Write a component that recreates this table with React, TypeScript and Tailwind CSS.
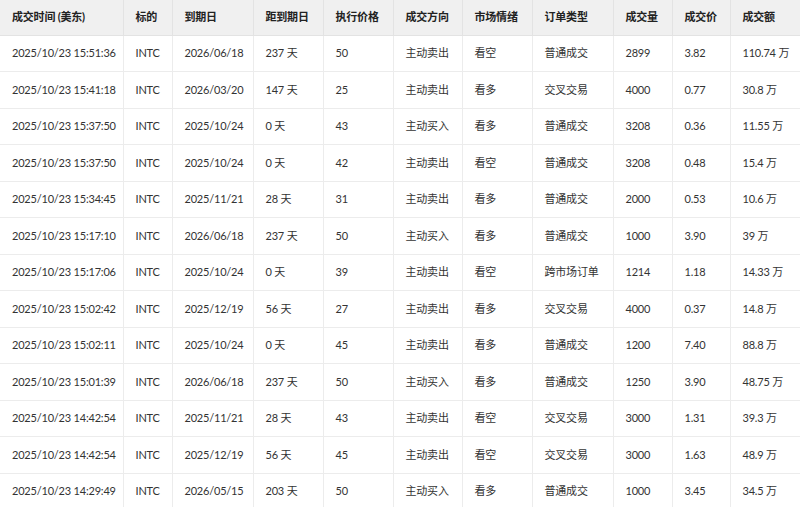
const cols = [
  { label: '成交时间 (美东)', w: 'w-[123px]' },
  { label: '标的', w: 'w-[49px]' },
  { label: '到期日', w: 'w-[81px]' },
  { label: '距到期日', w: 'w-[70px]' },
  { label: '执行价格', w: 'w-[70px]' },
  { label: '成交方向', w: 'w-[69px]' },
  { label: '市场情绪', w: 'w-[70px]' },
  { label: '订单类型', w: 'w-[81px]' },
  { label: '成交量', w: 'w-[59px]' },
  { label: '成交价', w: 'w-[58px]' },
  { label: '成交额', w: 'w-[70px]' },
];

const rows = [
  ['2025/10/23 15:51:36', 'INTC', '2026/06/18', '237 天', '50', '主动卖出', '看空', '普通成交', '2899', '3.82', '110.74 万'],
  ['2025/10/23 15:41:18', 'INTC', '2026/03/20', '147 天', '25', '主动卖出', '看多', '交叉交易', '4000', '0.77', '30.8 万'],
  ['2025/10/23 15:37:50', 'INTC', '2025/10/24', '0 天', '43', '主动买入', '看多', '普通成交', '3208', '0.36', '11.55 万'],
  ['2025/10/23 15:37:50', 'INTC', '2025/10/24', '0 天', '42', '主动卖出', '看空', '普通成交', '3208', '0.48', '15.4 万'],
  ['2025/10/23 15:34:45', 'INTC', '2025/11/21', '28 天', '31', '主动卖出', '看多', '普通成交', '2000', '0.53', '10.6 万'],
  ['2025/10/23 15:17:10', 'INTC', '2026/06/18', '237 天', '50', '主动买入', '看多', '普通成交', '1000', '3.90', '39 万'],
  ['2025/10/23 15:17:06', 'INTC', '2025/10/24', '0 天', '39', '主动卖出', '看空', '跨市场订单', '1214', '1.18', '14.33 万'],
  ['2025/10/23 15:02:42', 'INTC', '2025/12/19', '56 天', '27', '主动卖出', '看多', '交叉交易', '4000', '0.37', '14.8 万'],
  ['2025/10/23 15:02:11', 'INTC', '2025/10/24', '0 天', '45', '主动卖出', '看多', '普通成交', '1200', '7.40', '88.8 万'],
  ['2025/10/23 15:01:39', 'INTC', '2026/06/18', '237 天', '50', '主动买入', '看多', '普通成交', '1250', '3.90', '48.75 万'],
  ['2025/10/23 14:42:54', 'INTC', '2025/11/21', '28 天', '43', '主动卖出', '看空', '交叉交易', '3000', '1.31', '39.3 万'],
  ['2025/10/23 14:42:54', 'INTC', '2025/12/19', '56 天', '45', '主动卖出', '看空', '交叉交易', '3000', '1.63', '48.9 万'],
  ['2025/10/23 14:29:49', 'INTC', '2026/05/15', '203 天', '50', '主动买入', '看多', '普通成交', '1000', '3.45', '34.5 万'],
];

export default function App() {
  return (
    <div className="w-[800px] h-[507px] overflow-hidden bg-white font-['Lato','Noto_Sans_CJK_SC',sans-serif]">
      <table className="table-fixed border-collapse w-[800px] text-[11px] tracking-[-0.2px]">
        <thead>
          <tr className="h-[35px] bg-[#f0f0f0]">
            {cols.map((c) => (
              <th
                key={c.label}
                className={`${c.w} border-r last:border-r-0 border-b border-[#e3e3e3] px-[12px] text-left font-bold text-[#222] whitespace-nowrap`}
              >
                {c.label}
              </th>
            ))}
          </tr>
        </thead>
        <tbody>
          {rows.map((r, i) => (
            <tr key={i} className="h-[36.5px]">
              {r.map((v, j) => (
                <td
                  key={j}
                  className="border-r last:border-r-0 border-b border-[#ececec] px-[12px] text-[#333] whitespace-nowrap"
                >
                  {v}
                </td>
              ))}
            </tr>
          ))}
        </tbody>
      </table>
    </div>
  );
}
